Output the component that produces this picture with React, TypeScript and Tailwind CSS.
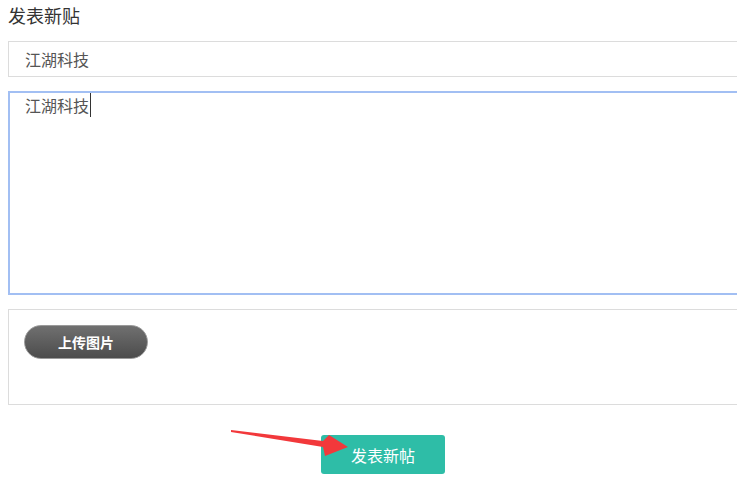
import React from 'react';

const font = { fontFamily: '"Noto Sans CJK SC", "Noto Sans", sans-serif' };

export default function App() {
  return (
    <div className="relative h-[483px] w-full overflow-hidden bg-white" style={font}>
      <div className="w-[770px] px-2">
        {/* Title */}
        <h1 className="text-[18px] leading-[30px] text-[#333]">发表新贴</h1>

        {/* Subject input */}
        <div className="mt-[11px] flex h-[36px] items-center border border-[#dcdcdc] pl-4 text-[16px] text-[#555]">
          江湖科技
        </div>

        {/* Content textarea */}
        <div className="mt-[14px] h-[204px] border-2 border-[#a2bff3] pl-[15px] pt-[4px] text-[16px] leading-[16px] text-[#555]">
          <span className="border-r border-[#333] pr-[1px]">江湖科技</span>
        </div>

        {/* Upload area */}
        <div className="mt-[14px] h-[96px] border border-[#dcdcdc] pl-[15px] pt-[15px]">
          <button
            type="button"
            className="flex h-[34px] w-[124px] items-center justify-center rounded-full border border-[#9a9a9a] bg-gradient-to-b from-[#707070] to-[#4c4c4c] text-[14px] font-bold text-white"
          >
            上传图片
          </button>
        </div>

        {/* Submit */}
        <button
          type="button"
          className="ml-[313px] mt-[30px] flex h-[39px] w-[124px] items-center justify-center rounded-[3px] bg-[#2ebda7] text-[16px] text-white"
        >
          发表新帖
        </button>
      </div>

      {/* Red annotation arrow */}
      <svg className="absolute left-0 top-0" width="737" height="483" viewBox="0 0 737 483">
        <polygon
          points="231,430 323,441 329,435 348,447 325,456 323,447 231,432"
          fill="#f2383b"
        />
      </svg>
    </div>
  );
}
